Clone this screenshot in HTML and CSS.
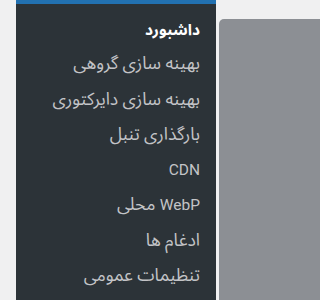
FILE: index.html
```html
<!DOCTYPE html>
<html lang="fa">
<head>
<meta charset="utf-8">
<link rel="stylesheet" href="styles.css">
</head>
<body>
<div class="page">
  <div class="gutter"></div>
  <nav class="submenu" dir="rtl">
    <ul class="menu">
      <li class="item current">داشبورد</li>
      <li class="item">بهینه سازی گروهی</li>
      <li class="item">بهینه سازی دایرکتوری</li>
      <li class="item">بارگذاری تنبل</li>
      <li class="item"><span class="latin">CDN</span></li>
      <li class="item"><span class="latin">WebP</span> محلی</li>
      <li class="item">ادغام ها</li>
      <li class="item">تنظیمات عمومی</li>
    </ul>
  </nav>
  <div class="thumb-col"><div class="thumb"></div></div>
</div>
</body>
</html>
```
FILE: styles.css
```css
html, body {
  margin: 0;
  padding: 0;
  background: #f0f0f1;
}
.page {
  display: flex;
  flex-direction: row;
  height: 300px;
  overflow: hidden;
}
.gutter {
  width: 16px;
  flex: none;
}
.submenu {
  width: 200px;
  flex: none;
  background: #2c3338;
  border-top: 4px solid #2271b1;
  box-sizing: border-box;
}
.thumb-col {
  flex: 1;
  padding-top: 19px;
  padding-left: 3px;
  display: flex;
}
.thumb {
  flex: 1;
  background: #8c8f94;
  border-radius: 5px 0 0 0;
}
.menu {
  list-style: none;
  margin: 0;
  padding: 7px 16px 0 0;
  font-family: Roboto, "Noto Sans Arabic", "DejaVu Sans", sans-serif;
  font-size: 17.5px;
}
.item {
  height: 35.3px;
  line-height: 35.3px;
  color: #c3c4c7;
  white-space: nowrap;
}
.latin {
  font-size: 15.5px;
}
.item.current {
  color: #ffffff;
  font-weight: 700;
  font-size: 15.5px;
  line-height: 39px;
}
```
